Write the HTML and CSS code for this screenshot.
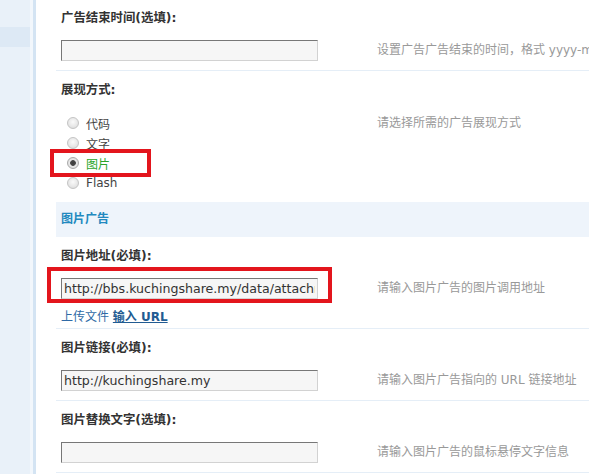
FILE: index.html
```html
<!DOCTYPE html>
<html lang="zh-CN">
<head>
    <meta charset="UTF-8">
    <title>广告设置</title>
    <link rel="stylesheet" href="styles.css">
</head>
<body>
    <div class="page">
        <!-- left menu strip -->
        <div class="sidebar">
            <div class="side-item"></div>
            <div class="side-item active"></div>
            <div class="side-item"></div>
        </div>

        <div class="main">
            <div class="row first">
                <div class="label">广告结束时间(选填):</div>
                <div class="field">
                    <div class="control"><div class="input-wrap"><input class="txt" type="text" value=""></div></div>
                    <div class="tip">设置广告广告结束的时间，格式 yyyy-mm-dd</div>
                </div>
            </div>

            <div class="row radios-row">
                <div class="label">展现方式:</div>
                <div class="field">
                    <div class="control">
                        <ul class="radios">
                            <li class="radio-item"><span class="radio"></span>代码</li>
                            <li class="radio-item"><span class="radio"></span>文字</li>
                            <li class="radio-item checked"><span class="radio"></span>图片<span class="mark mark-radio"></span></li>
                            <li class="radio-item"><span class="radio"></span>Flash</li>
                        </ul>
                    </div>
                    <div class="tip">请选择所需的广告展现方式</div>
                </div>
            </div>

            <div class="section-head">图片广告</div>

            <div class="row with-links">
                <div class="label">图片地址(必填):</div>
                <div class="field">
                    <div class="control">
                        <div class="input-wrap">
                            <input class="txt" type="text" value="http://bbs.kuchingshare.my/data/attachment/common/ad.jpg">
                            <span class="mark mark-input"></span>
                        </div>
                        <div class="links"><a href="#">上传文件</a> <a href="#" class="active-link">输入 URL</a></div>
                    </div>
                    <div class="tip">请输入图片广告的图片调用地址</div>
                </div>
            </div>

            <div class="row">
                <div class="label">图片链接(必填):</div>
                <div class="field">
                    <div class="control"><div class="input-wrap"><input class="txt" type="text" value="http://kuchingshare.my"></div></div>
                    <div class="tip">请输入图片广告指向的 URL 链接地址</div>
                </div>
            </div>

            <div class="row">
                <div class="label">图片替换文字(选填):</div>
                <div class="field">
                    <div class="control"><div class="input-wrap"><input class="txt" type="text" value=""></div></div>
                    <div class="tip">请输入图片广告的鼠标悬停文字信息</div>
                </div>
            </div>
        </div>
    </div>
</body>
</html>
```

FILE: styles.css
```css
body {
    margin: 0;
    padding: 0;
    font-family: "DejaVu Sans", "Noto Sans CJK SC", sans-serif;
    font-size: 12px;
    color: #333;
    background: #fff;
    overflow: hidden;
}
.page {
    display: flex;
    height: 474px;
    overflow: hidden;
}
.sidebar {
    width: 30px;
    padding-right: 3px;
    background: #f2f7fc;
    border-right: 3px solid #d4e4f3;
    display: flex;
    flex-direction: column;
}
.side-item {
    height: 27px;
    background: #e9f1f9;
}
.side-item.active {
    height: 20px;
    background: #dde9f5;
}
.side-item:last-child {
    flex: 1;
}
.main {
    flex: 1;
    padding-left: 20px;
    min-width: 0;
}
.row {
    padding: 11px 0 9px;
    border-bottom: 1px solid #e5eef7;
}
.row.first {
    padding-top: 10px;
    border-top: 1px solid #e5eef7;
    margin-top: -1px;
}
.label {
    padding-left: 5px;
    line-height: 16px;
    font-weight: bold;
    font-size: 12.4px;
    color: #333;
}
.field {
    display: flex;
    align-items: flex-start;
    margin-top: 14px;
}
.control {
    width: 314px;
    padding-left: 5px;
    flex-shrink: 0;
}
.input-wrap {
    position: relative;
    width: 257px;
}
.txt {
    box-sizing: border-box;
    display: block;
    width: 257px;
    height: 21px;
    margin: 0;
    padding: 0 2px;
    border: 1px solid #d2d2d2;
    border-top-color: #777;
    border-left-color: #777;
    background: #f6f6f6;
    font-family: "DejaVu Sans", sans-serif;
    font-size: 12.6px;
    color: #333;
    outline: none;
}
.tip {
    padding-left: 2px;
    line-height: 21px;
    color: #999;
    white-space: nowrap;
}

/* display type radios */
.radios-row {
    padding-bottom: 9px;
    border-bottom: none;
}
.radios-row .field {
    margin-top: 15px;
}
.radios {
    list-style: none;
    margin: 0;
    padding: 0 0 0 6px;
}
.radio-item {
    position: relative;
    display: flex;
    align-items: center;
    height: 20px;
    color: #444;
}
.radio-item.checked {
    color: #2aa52a;
}
.radio {
    box-sizing: border-box;
    width: 12px;
    height: 12px;
    margin-right: 7px;
    border: 1px solid #c4c4c4;
    border-radius: 50%;
    background: radial-gradient(circle at 50% 40%, #fafafa 0%, #e6e6e6 60%, #d4d4d4 100%);
}
.checked .radio {
    background: radial-gradient(circle, #3c3c3c 0, #4a4a4a 2.5px, #e9e9e9 3.2px, #d6d6d6 100%);
    border-color: #aaa;
}

/* red annotation boxes */
.mark {
    position: absolute;
    box-sizing: border-box;
    border: 4px solid #e3151d;
    pointer-events: none;
}
.mark-radio {
    left: -17px;
    top: -4px;
    width: 101px;
    height: 28px;
}
.mark-input {
    left: -14px;
    top: -11px;
    width: 285px;
    height: 36px;
}

.section-head {
    height: 35px;
    line-height: 35px;
    padding-left: 5px;
    background: #eef4fb;
    color: #2289bf;
    font-weight: bold;
}

.with-links {
    padding-bottom: 3px;
}
.links {
    margin-top: 10px;
    line-height: 16px;
}
.links a {
    color: #2f6aa6;
    text-decoration: none;
}
.links a.active-link {
    color: #215b92;
    font-weight: bold;
    text-decoration: underline;
}
```
